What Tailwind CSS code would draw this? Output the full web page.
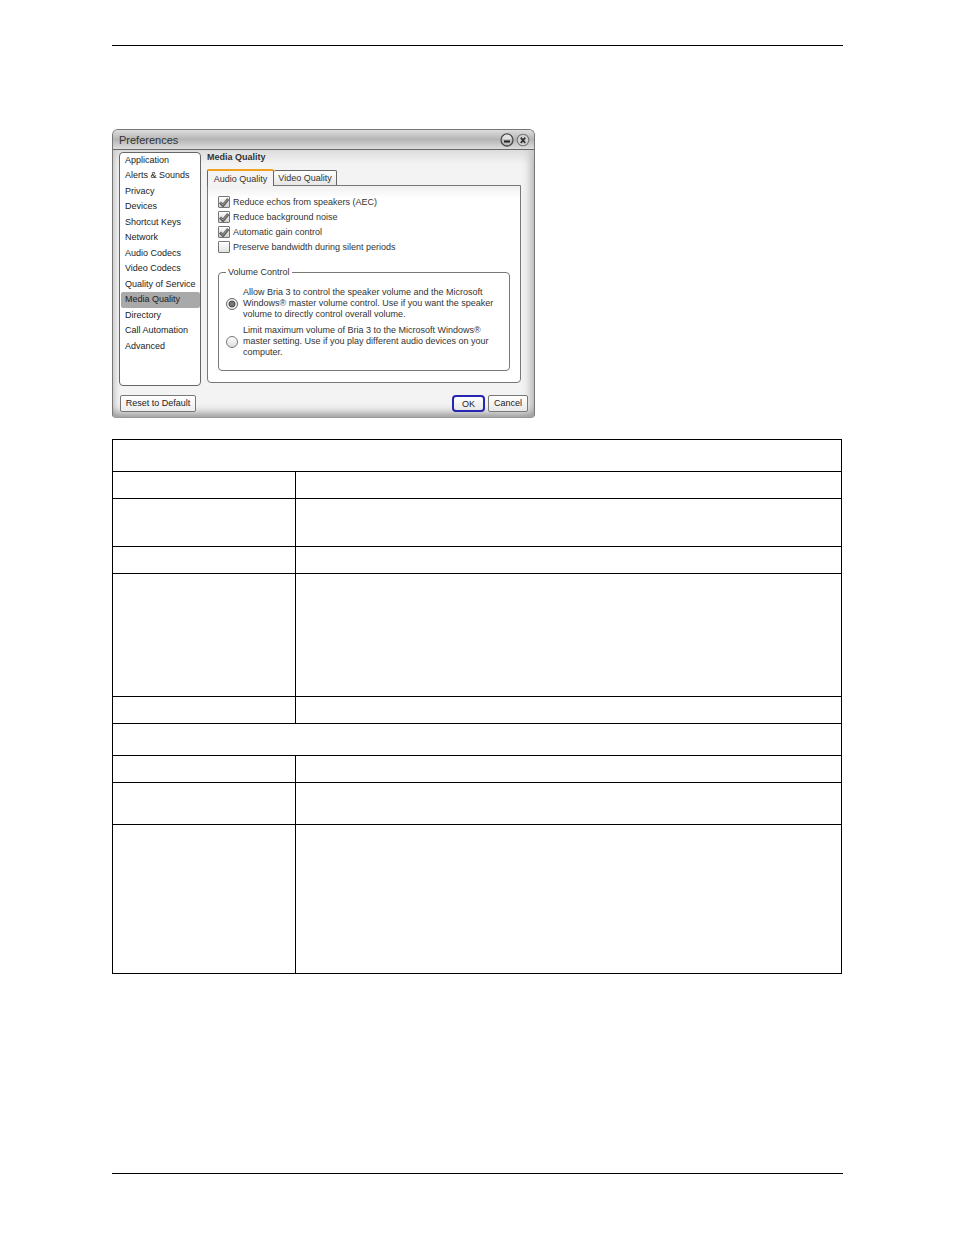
<!DOCTYPE html>
<html lang="en">
<head>
  <meta charset="UTF-8" />
  <title>Preferences - Media Quality</title>
  <script src="https://cdn.jsdelivr.net/npm/@tailwindcss/browser@4"></script>
  <meta name="viewport" content="width=device-width, initial-scale=1.0" />
</head>
<body class="bg-white min-h-screen flex flex-col pl-28 pr-[111px] pt-[45px] pb-[61px] font-['Liberation_Sans',Arial,sans-serif] text-[#333]">
  <header class="border-t border-black"></header>

  <main class="flex-1 pt-[83px]">
    <!-- Preferences window -->
    <section class="w-full max-w-[423px] border border-[#777] border-b-[#999] rounded-t-md rounded-b-sm overflow-hidden bg-[#f3f3f3] text-[9px] shadow-[inset_0_-8px_9px_-4px_#999,inset_-7px_0_10px_-4px_#b5b5b5,inset_5px_0_7px_-4px_#c5c5c5]">
      <div class="h-5 flex items-center justify-between pl-1.5 pr-1 border-b border-[#666] bg-linear-to-b from-[#ddd] via-[#b5b5b5] to-[#dedede]">
        <h1 class="text-[11px] leading-4">Preferences</h1>
        <div class="flex gap-0.5">
          <button aria-label="Minimize">
            <svg class="block size-[14px]" viewBox="0 0 14 14">
              <circle cx="7" cy="7" r="6" fill="#bdbdbd" stroke="#4a4a4a" stroke-width="1.3" />
              <path d="M2.5 6a4.5 4.5 0 0 1 9 0z" fill="#e2e2e2" />
              <path d="M4 8.5h6" stroke="#222" stroke-width="2" />
            </svg>
          </button>
          <button aria-label="Close">
            <svg class="block size-[14px]" viewBox="0 0 14 14">
              <circle cx="7" cy="7" r="5.8" fill="#d0d0d0" stroke="#777" stroke-width="1.1" />
              <path d="M4.8 4.6l4.4 5.4M9.2 4.6l-4.4 5.4" stroke="#333" stroke-width="1.8" />
            </svg>
          </button>
        </div>
      </div>

      <div class="flex items-start gap-1.5 pl-1.5 pr-[13px] pt-0.5 bg-linear-to-b from-[#ccc]/60 to-transparent to-[14px]">
        <nav class="w-[82px] h-[234px] shrink-0 border border-[#666] rounded bg-white">
          <ul class="h-[201px] grid auto-rows-fr text-[#222] whitespace-nowrap">
            <li class="flex items-center px-[5px]"><a href="#">Application</a></li>
            <li class="flex items-center px-[5px]"><a href="#">Alerts &amp; Sounds</a></li>
            <li class="flex items-center px-[5px]"><a href="#">Privacy</a></li>
            <li class="flex items-center px-[5px]"><a href="#">Devices</a></li>
            <li class="flex items-center px-[5px]"><a href="#">Shortcut Keys</a></li>
            <li class="flex items-center px-[5px]"><a href="#">Network</a></li>
            <li class="flex items-center px-[5px]"><a href="#">Audio Codecs</a></li>
            <li class="flex items-center px-[5px]"><a href="#">Video Codecs</a></li>
            <li class="flex items-center px-[5px]"><a href="#">Quality of Service</a></li>
            <li class="flex items-center px-1 mx-px bg-[#a9a9a9] rounded-xs"><a href="#" aria-current="page">Media Quality</a></li>
            <li class="flex items-center px-[5px]"><a href="#">Directory</a></li>
            <li class="flex items-center px-[5px]"><a href="#">Call Automation</a></li>
            <li class="flex items-center px-[5px]"><a href="#">Advanced</a></li>
          </ul>
        </nav>

        <div class="flex-1 min-w-0">
          <h2 class="font-bold leading-[11px] pb-1.5">Media Quality</h2>
          <div role="tablist" class="flex items-end">
            <button role="tab" aria-selected="true" class="relative z-10 w-[67px] h-[17px] -mb-px border border-[#666] border-t-2 border-t-[#f0a020] border-b-0 rounded-t-xs bg-[#f3f3f3] leading-3">Audio Quality</button>
            <button role="tab" aria-selected="false" class="w-[63px] h-[15px] border border-l-0 border-b-0 border-[#666] rounded-t-xs bg-linear-to-b from-white to-[#e6e6e6] leading-3">Video Quality</button>
          </div>

          <div role="tabpanel" class="h-[198px] border border-[#777] rounded-b bg-linear-to-b from-[#f0f0f0] to-white to-[12px] px-2.5 pt-2.5">
            <div class="grid gap-[3px] leading-3">
              <label class="flex items-center gap-[3px]">
                <span class="relative size-3">
                  <input type="checkbox" checked class="block appearance-none size-3 border border-[#777] rounded-[1px] bg-linear-to-b from-white to-[#d0d0d0]" />
                  <svg class="absolute inset-0 size-3 pointer-events-none" viewBox="0 0 12 12"><path d="M2 6.5l3 3L10.3 3" fill="none" stroke="#666" stroke-width="3" /><path d="M2.6 6.5l2.4 2.4L9.7 3.5" fill="none" stroke="#999" stroke-width="1" /></svg>
                </span>
                Reduce echos from speakers (AEC)
              </label>
              <label class="flex items-center gap-[3px]">
                <span class="relative size-3">
                  <input type="checkbox" checked class="block appearance-none size-3 border border-[#777] rounded-[1px] bg-linear-to-b from-white to-[#d0d0d0]" />
                  <svg class="absolute inset-0 size-3 pointer-events-none" viewBox="0 0 12 12"><path d="M2 6.5l3 3L10.3 3" fill="none" stroke="#666" stroke-width="3" /><path d="M2.6 6.5l2.4 2.4L9.7 3.5" fill="none" stroke="#999" stroke-width="1" /></svg>
                </span>
                Reduce background noise
              </label>
              <label class="flex items-center gap-[3px]">
                <span class="relative size-3">
                  <input type="checkbox" checked class="block appearance-none size-3 border border-[#777] rounded-[1px] bg-linear-to-b from-white to-[#d0d0d0]" />
                  <svg class="absolute inset-0 size-3 pointer-events-none" viewBox="0 0 12 12"><path d="M2 6.5l3 3L10.3 3" fill="none" stroke="#666" stroke-width="3" /><path d="M2.6 6.5l2.4 2.4L9.7 3.5" fill="none" stroke="#999" stroke-width="1" /></svg>
                </span>
                Automatic gain control
              </label>
              <label class="flex items-center gap-[3px]">
                <input type="checkbox" class="appearance-none size-3 border border-[#777] rounded-[1px] bg-linear-to-b from-white to-[#e2e2e2]" />
                Preserve bandwidth during silent periods
              </label>
            </div>

            <fieldset class="mt-[13px] h-[105px] border border-[#777] rounded px-[7px]">
              <legend class="px-0.5 leading-3">Volume Control</legend>
              <div class="grid gap-[5px] pt-[9px] leading-[11px]">
                <label class="flex items-center gap-[5px]">
                  <span class="relative shrink-0 size-3">
                    <input type="radio" name="volume" checked class="block appearance-none size-3 border border-[#666] rounded-full bg-[#f0f0f0]" />
                    <svg class="absolute inset-0 size-3 pointer-events-none" viewBox="0 0 12 12"><circle cx="6" cy="6" r="3" fill="#777" stroke="#444" stroke-width="1" /></svg>
                  </span>
                  <span>Allow Bria 3 to control the speaker volume and the Microsoft<br />Windows® master volume control. Use if you want the speaker<br />volume to directly control overall volume.</span>
                </label>
                <label class="flex items-center gap-[5px]">
                  <input type="radio" name="volume" class="appearance-none shrink-0 size-3 border border-[#777] rounded-full bg-linear-to-b from-white to-[#ddd]" />
                  <span>Limit maximum volume of Bria 3 to the Microsoft Windows®<br />master setting. Use if you play different audio devices on your<br />computer.</span>
                </label>
              </div>
            </fieldset>
          </div>
        </div>
      </div>

      <div class="flex gap-[3px] pl-[7px] pr-1.5 pt-[9px] pb-[5px] text-[#222]">
        <button class="w-[76px] h-[17px] mr-auto border border-[#777] rounded-xs bg-linear-to-b from-white to-[#eee]">Reset to Default</button>
        <button class="w-[33px] h-[17px] border-2 border-[#2626b0] rounded-sm bg-linear-to-b from-white to-[#e8e8e8] leading-3">OK</button>
        <button class="w-10 h-[17px] border border-[#777] rounded-xs bg-linear-to-b from-white to-[#e8e8e8]">Cancel</button>
      </div>
    </section>

    <!-- Field descriptions, not filled in yet -->
    <div class="pt-[21px] pr-px">
      <table class="w-full table-fixed border-collapse border border-black">
        <colgroup>
          <col class="w-[183px]" />
          <col />
        </colgroup>
        <tbody>
          <tr class="h-8"><td colspan="2" class="border border-black"></td></tr>
          <tr class="h-[27px]"><td class="border border-black"></td><td class="border border-black"></td></tr>
          <tr class="h-12"><td class="border border-black"></td><td class="border border-black"></td></tr>
          <tr class="h-[27px]"><td class="border border-black"></td><td class="border border-black"></td></tr>
          <tr class="h-[123px]"><td class="border border-black"></td><td class="border border-black"></td></tr>
          <tr class="h-[27px]"><td class="border border-black"></td><td class="border border-black"></td></tr>
          <tr class="h-8"><td colspan="2" class="border border-black"></td></tr>
          <tr class="h-[27px]"><td class="border border-black"></td><td class="border border-black"></td></tr>
          <tr class="h-[42px]"><td class="border border-black"></td><td class="border border-black"></td></tr>
          <tr class="h-[149px]"><td class="border border-black"></td><td class="border border-black"></td></tr>
        </tbody>
      </table>
    </div>
  </main>

  <footer class="border-t border-black"></footer>
</body>
</html>
